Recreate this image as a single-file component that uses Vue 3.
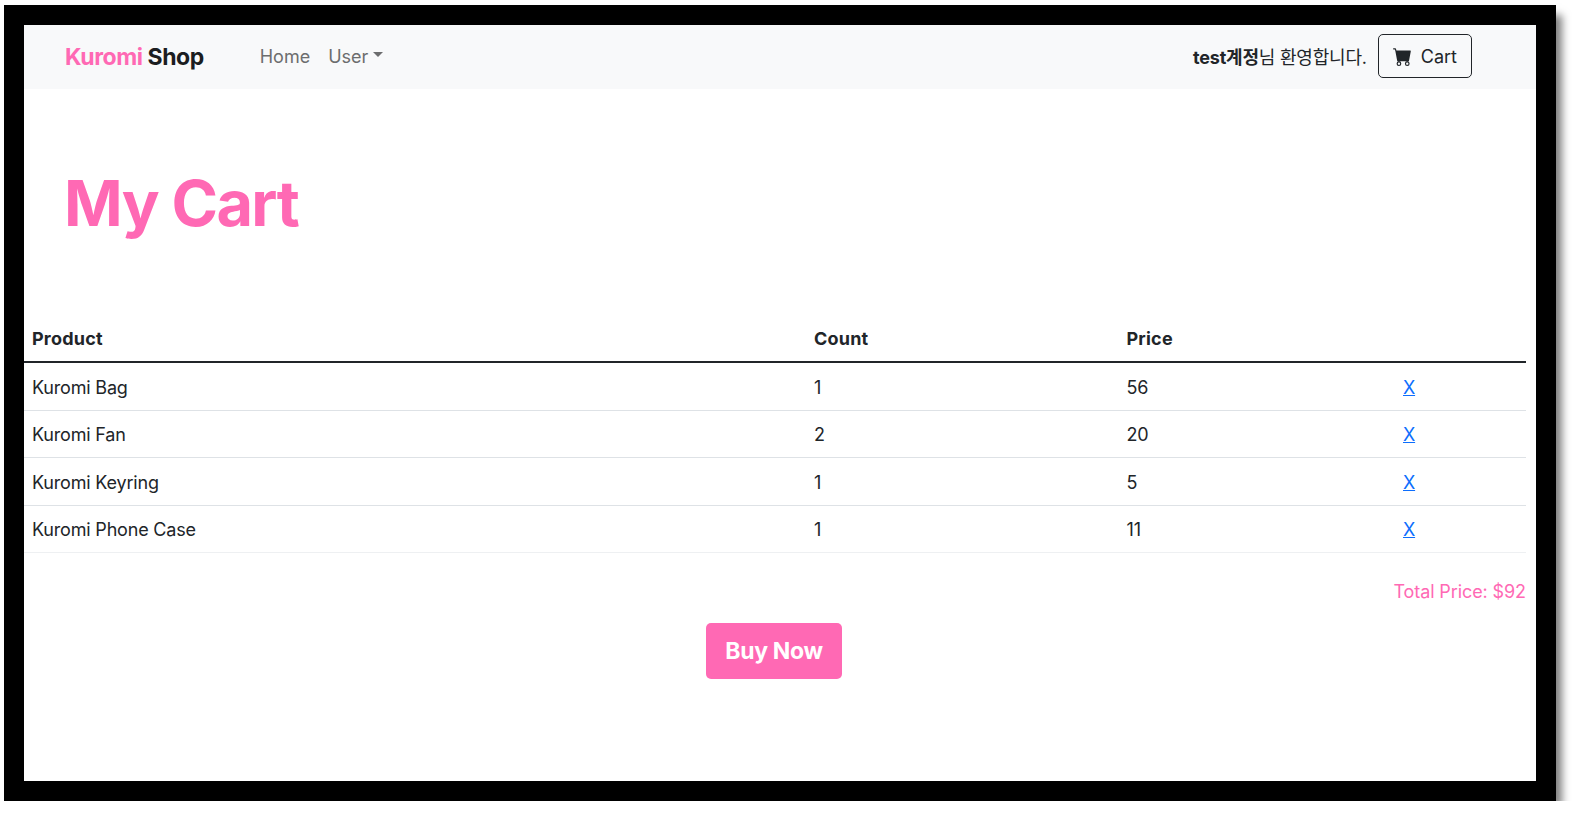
<template>
  <div class="frame">
    <div class="page">
      <nav class="navbar">
        <div class="nav-left">
          <a class="brand"><span class="pink">Kuromi</span> Shop</a>
          <ul class="nav-links">
            <li>Home</li>
            <li class="dropdown">User<span class="caret"></span></li>
          </ul>
        </div>
        <div class="nav-right">
          <span class="welcome"><b>test계정</b>님 환영합니다.</span>
          <button class="cart-btn">
            <svg class="cart-icon" viewBox="0 0 16 16" width="19" height="19" fill="currentColor">
              <path d="M0 1.5A.5.5 0 0 1 .5 1H2a.5.5 0 0 1 .485.379L2.89 3H14.5a.5.5 0 0 1 .491.592l-1.5 8A.5.5 0 0 1 13 12H4a.5.5 0 0 1-.491-.408L2.01 3.607 1.61 2H.5a.5.5 0 0 1-.5-.5zM5 12a2 2 0 1 0 0 4 2 2 0 0 0 0-4zm7 0a2 2 0 1 0 0 4 2 2 0 0 0 0-4zm-7 1a1 1 0 1 1 0 2 1 1 0 0 1 0-2zm7 0a1 1 0 1 1 0 2 1 1 0 0 1 0-2z"/>
            </svg>
            Cart
          </button>
        </div>
      </nav>

      <h1 class="title">My Cart</h1>

      <div class="cart">
        <table class="cart-table">
          <colgroup>
            <col style="width: 782px" />
            <col style="width: 312.5px" />
            <col style="width: 276.5px" />
            <col />
          </colgroup>
          <thead>
            <tr>
              <th>Product</th>
              <th>Count</th>
              <th>Price</th>
              <th></th>
            </tr>
          </thead>
          <tbody>
            <tr v-for="item in items" :key="item.name">
              <td>{{ item.name }}</td>
              <td>{{ item.count }}</td>
              <td>{{ item.price }}</td>
              <td><a class="remove" href="#">X</a></td>
            </tr>
          </tbody>
        </table>
        <div class="total">Total Price: ${{ total }}</div>
      </div>

      <div class="buy-row">
        <button class="buy-btn">Buy Now</button>
      </div>
    </div>
  </div>
</template>

<script setup>
import { computed } from 'vue';

const items = [
  { name: 'Kuromi Bag', count: 1, price: 56 },
  { name: 'Kuromi Fan', count: 2, price: 20 },
  { name: 'Kuromi Keyring', count: 1, price: 5 },
  { name: 'Kuromi Phone Case', count: 1, price: 11 }
];

const total = computed(() => items.reduce((sum, item) => sum + item.price, 0));
</script>

<style>
html,
body {
  background: #fff;
}
</style>

<style scoped>
.frame {
  box-sizing: border-box;
  width: 1552px;
  height: 796px;
  margin: 5px 0 0 4px;
  padding: 20px;
  background: #000;
  box-shadow: 8px 8px 8px -2px rgba(0, 0, 0, 0.5);
  font-family: Inter, "Noto Sans CJK KR", sans-serif;
  color: #212529;
}

.page {
  height: 756px;
  background: #fff;
}

.navbar {
  display: flex;
  align-items: center;
  justify-content: space-between;
  box-sizing: border-box;
  height: 64px;
  padding: 0 64px 2px 41px;
  background: #f8f9fa;
}

.nav-left,
.nav-right {
  display: flex;
  align-items: center;
}

.brand {
  padding-top: 2px;
  font-size: 23px;
  font-weight: 700;
  letter-spacing: -0.45px;
  color: #1b1d20;
}

.pink {
  color: #ff69b4;
}

.nav-links {
  display: flex;
  gap: 18px;
  margin: 0 0 0 56px;
  padding: 0;
  list-style: none;
  font-size: 18px;
  color: #6c6d6e;
}

.dropdown {
  display: flex;
  align-items: center;
}

.caret {
  margin: 0 0 3px 5px;
  border-top: 5px solid currentColor;
  border-left: 5.5px solid transparent;
  border-right: 5.5px solid transparent;
}

.welcome {
  margin-right: 11px;
  font-size: 18px;
  letter-spacing: -0.2px;
}

.welcome b {
  font-weight: 700;
}

.cart-btn {
  display: flex;
  align-items: center;
  gap: 9px;
  height: 44px;
  padding: 0 14px;
  background: transparent;
  border: 1px solid #212529;
  border-radius: 5px;
  font: inherit;
  font-size: 18px;
  color: #212529;
}

.title {
  margin: 0;
  padding: 76px 0 0 40px;
  font-size: 63px;
  line-height: 76px;
  font-weight: 700;
  letter-spacing: -1.6px;
  color: #ff69b4;
}

.cart {
  width: 1502px;
  margin-top: 74px;
}

.cart-table {
  width: 100%;
  table-layout: fixed;
  border-collapse: collapse;
  font-size: 18px;
}

.cart-table th {
  height: 46px;
  padding: 0 8px;
  text-align: left;
  font-weight: 700;
  letter-spacing: 0.2px;
  border-bottom: 2px solid #212529;
}

.cart-table td {
  height: 44.5px;
  padding: 2px 8px 0;
  letter-spacing: -0.18px;
  border-bottom: 1px solid #dee2e6;
}

.cart-table tbody tr:last-child td {
  border-bottom-color: #eef0f2;
}

.remove {
  color: #0d6efd;
}

.total {
  margin-top: 28px;
  text-align: right;
  font-size: 18px;
  letter-spacing: -0.1px;
  color: #ff69b4;
}

.buy-row {
  display: flex;
  justify-content: center;
  width: 1500px;
  margin-top: 21px;
}

.buy-btn {
  height: 56px;
  padding: 0 19px;
  background: #ff69b4;
  border: none;
  border-radius: 5px;
  font: inherit;
  font-size: 23px;
  font-weight: 700;
  letter-spacing: -0.35px;
  color: #fff;
}
</style>
